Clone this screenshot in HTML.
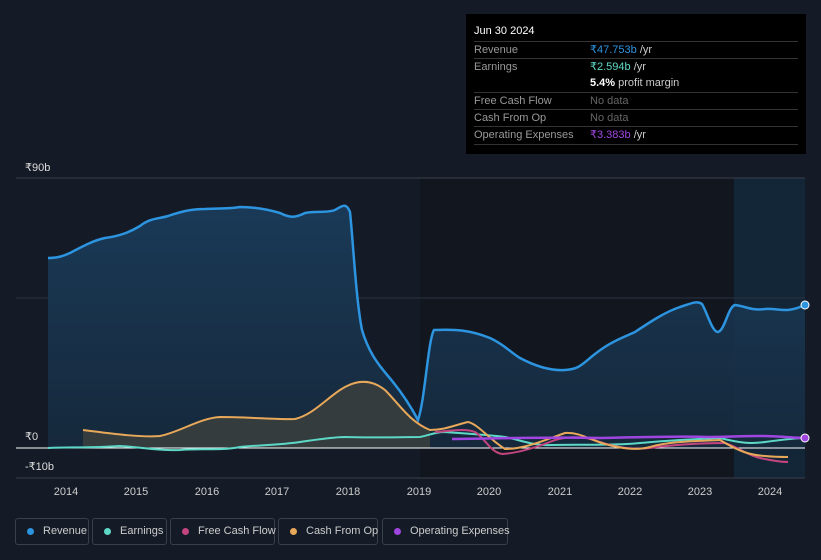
<!DOCTYPE html>
<html><head><meta charset="utf-8"><style>
html,body{margin:0;width:821px;height:560px;overflow:hidden}
body{background:#151b26;font-family:"Liberation Sans",sans-serif;position:relative}
.tip{position:absolute;left:466px;top:14px;width:340px;height:140px;background:#000;color:#ddd;font-size:11px}
.tip .h{position:absolute;left:8px;top:11px;color:#fff;font-size:11px}
.row{position:absolute;left:8px;width:324px;border-top:1px solid #333;height:17px;line-height:17px;white-space:nowrap}
.row .l{position:absolute;left:0;color:#999}
.row .v{position:absolute;left:116px;color:#ccc}
.leg{position:absolute;top:518px;height:27px;border:1px solid #3a3f4a;border-radius:3px;color:#ccc;font-size:11px;line-height:25px;box-sizing:border-box;white-space:nowrap}
.leg i{position:absolute;left:11px;top:9px;width:7px;height:7px;border-radius:50%}
.leg span{position:absolute;left:27px}
.ax{position:absolute;color:#ddd;font-size:11px}
</style></head><body>
<svg width="821" height="560" style="position:absolute;left:0;top:0">
<defs><linearGradient id="rg" x1="0" y1="0" x2="0" y2="1"><stop offset="0" stop-color="#1a3d5c"/><stop offset="1" stop-color="#162a3e"/></linearGradient></defs>
<rect x="420" y="178" width="385" height="300" fill="#11161f"/>
<rect x="734" y="178" width="71" height="300" fill="#16324a" opacity="0.6"/>
<line x1="16" y1="178" x2="805" y2="178" stroke="#3a3f4a"/>
<line x1="16" y1="298" x2="805" y2="298" stroke="#2c3340"/>
<line x1="16" y1="478" x2="805" y2="478" stroke="#3a3f4a"/>
<path d="M48,258 C58,258 63,256 70,253 C85,245 95,240 105,238 C120,236 130,232 140,226 C150,218 158,219 168,216 C180,212 190,209 205,209 C220,208 230,209 240,207 C255,207 270,210 280,213 C290,218 295,218 305,213 C315,211 328,213 335,210 C342,206 346,202 350,212 C353,240 356,300 362,330 C368,350 376,362 388,376 C400,390 410,405 418,420 C425,400 428,340 434,330 C455,329 470,330 490,338 C505,345 510,352 520,358 C535,366 550,371 565,370 C580,369 582,364 595,354 C610,342 622,338 635,332 C650,322 665,312 680,307 C690,304 697,300 702,304 C707,312 712,332 718,332 C725,330 728,307 735,305 C745,306 752,311 765,309 C780,308 785,314 805,305 L805,448 L48,448 Z" fill="url(#rg)" opacity="0.9"/>
<path d="M83,430 C100,432 140,438 160,436 C180,432 200,418 220,417 C250,417 280,420 295,419 C312,415 325,400 340,390 C355,380 370,378 385,390 C400,405 410,422 430,430 L430,448 L83,448 Z" fill="#3a3f3e" opacity="0.85"/>
<path d="M48,258 C58,258 63,256 70,253 C85,245 95,240 105,238 C120,236 130,232 140,226 C150,218 158,219 168,216 C180,212 190,209 205,209 C220,208 230,209 240,207 C255,207 270,210 280,213 C290,218 295,218 305,213 C315,211 328,213 335,210 C342,206 346,202 350,212 C353,240 356,300 362,330 C368,350 376,362 388,376 C400,390 410,405 418,420 C425,400 428,340 434,330 C455,329 470,330 490,338 C505,345 510,352 520,358 C535,366 550,371 565,370 C580,369 582,364 595,354 C610,342 622,338 635,332 C650,322 665,312 680,307 C690,304 697,300 702,304 C707,312 712,332 718,332 C725,330 728,307 735,305 C745,306 752,311 765,309 C780,308 785,314 805,305" fill="none" stroke="#2d94e0" stroke-width="2.5"/>
<line x1="16" y1="448" x2="805" y2="448" stroke="#fff" stroke-width="1"/>
<path d="M48,448 C70,447 90,448 120,446 C140,447 160,451 180,450 C200,448 220,451 240,447 C260,445 280,445 300,442 C320,439 335,437 345,437 C370,438 400,437 420,437 C430,435 435,432 445,432 C470,434 490,435 505,437 C520,440 535,446 550,445 C580,444 610,446 640,443 C670,440 700,439 720,438 C740,443 750,444 765,442 C780,440 795,438 805,438" fill="none" stroke="#5ed8c6" stroke-width="2"/>
<path d="M435,432 C450,431 465,428 475,432 C485,438 490,452 502,454 C520,453 540,446 555,440 C570,436 585,436 600,442 C615,447 630,450 650,448 C670,445 700,443 725,443 C740,448 750,457 765,459 C775,461 782,462 788,462" fill="none" stroke="#c2457f" stroke-width="2"/>
<path d="M83,430 C100,432 140,438 160,436 C180,432 200,418 220,417 C250,417 280,420 295,419 C312,415 325,400 340,390 C355,380 370,378 385,390 C400,405 410,422 430,430 C445,430 455,425 468,422 C478,424 490,440 505,449 C525,449 545,440 565,433 C580,432 590,440 605,444 C620,448 635,451 650,447 C670,441 700,441 720,440 C740,452 750,455 765,456 C775,457 782,457 788,457" fill="none" stroke="#e8a85a" stroke-width="2"/>
<path d="M452,439 C520,438 560,437 600,438 C650,437 690,436 705,437 C725,437 740,436 760,436 C780,436 795,438 805,438" fill="none" stroke="#a046e0" stroke-width="2.5"/>
<circle cx="805" cy="305" r="4" fill="#2d94e0" stroke="#fff" stroke-width="1"/>
<circle cx="805" cy="438" r="4" fill="#a046e0" stroke="#fff" stroke-width="1"/>
<g fill="#ccc" font-size="11" font-family="Liberation Sans,sans-serif" text-anchor="middle">
<text x="66" y="495">2014</text><text x="136" y="495">2015</text><text x="207" y="495">2016</text><text x="277" y="495">2017</text><text x="348" y="495">2018</text><text x="419" y="495">2019</text><text x="489" y="495">2020</text><text x="560" y="495">2021</text><text x="630" y="495">2022</text><text x="700" y="495">2023</text><text x="770" y="495">2024</text>
</g>
</svg>
<div class="ax" style="left:25px;top:161px">₹90b</div>
<div class="ax" style="left:25px;top:430px">₹0</div>
<div class="ax" style="left:25px;top:460px">-₹10b</div>
<div class="tip">
<div class="h">Jun 30 2024</div>
<div class="row" style="top:27px"><span class="l">Revenue</span><span class="v"><b style="color:#2d94e0;font-weight:normal">₹47.753b</b> /yr</span></div>
<div class="row" style="top:44px"><span class="l">Earnings</span><span class="v"><b style="color:#5ed8c6;font-weight:normal">₹2.594b</b> /yr</span></div>
<div class="row" style="top:61px;border:none"><span class="v"><b style="color:#fff">5.4%</b> profit margin</span></div>
<div class="row" style="top:78px"><span class="l">Free Cash Flow</span><span class="v" style="color:#666">No data</span></div>
<div class="row" style="top:95px"><span class="l">Cash From Op</span><span class="v" style="color:#666">No data</span></div>
<div class="row" style="top:112px;border-bottom:1px solid #333"><span class="l">Operating Expenses</span><span class="v"><b style="color:#a046e0;font-weight:normal">₹3.383b</b> /yr</span></div>
</div>
<div class="leg" style="left:15px;width:74px"><i style="background:#2d94e0"></i><span>Revenue</span></div>
<div class="leg" style="left:92px;width:75px"><i style="background:#5ed8c6"></i><span>Earnings</span></div>
<div class="leg" style="left:170px;width:105px"><i style="background:#c2457f"></i><span>Free Cash Flow</span></div>
<div class="leg" style="left:278px;width:100px"><i style="background:#e8a85a"></i><span>Cash From Op</span></div>
<div class="leg" style="left:382px;width:126px"><i style="background:#a046e0"></i><span>Operating Expenses</span></div>
</body></html>
